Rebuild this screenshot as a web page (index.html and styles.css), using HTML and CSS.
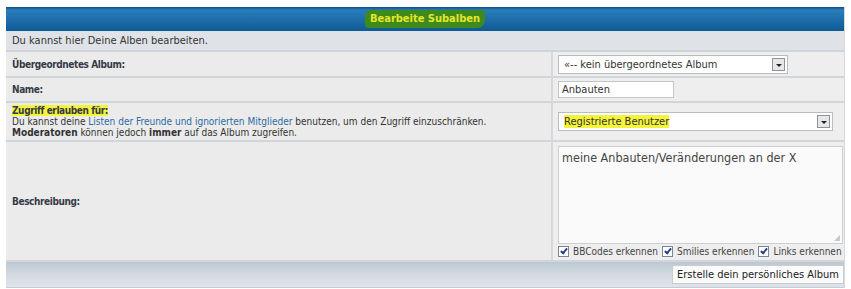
FILE: index.html
```html
<!DOCTYPE html>
<html lang="de">
<head>
  <meta charset="UTF-8" />
  <title>Bearbeite Subalben</title>
  <link rel="stylesheet" href="styles.css">
</head>
<body>
  <div class="panel">
    <div class="head"><span class="marker">Bearbeite Subalben</span></div>

    <div class="intro">Du kannst hier Deine Alben bearbeiten.</div>

    <div class="row r-parent">
      <div class="label"><b>Übergeordnetes Album:</b></div>
      <div class="field">
        <div class="select sel-parent">
          <span class="sel-text">«-- kein übergeordnetes Album</span>
          <span class="arrow"></span>
        </div>
      </div>
    </div>

    <div class="row r-name">
      <div class="label"><b>Name:</b></div>
      <div class="field">
        <div class="input">Anbauten</div>
      </div>
    </div>

    <div class="row r-access">
      <div class="label">
        <b class="hl">Zugriff erlauben für:</b>
        <div class="desc">
          Du kannst deine <a href="#">Listen der Freunde und ignorierten Mitglieder</a> benutzen, um den Zugriff einzuschränken.<br>
          <b>Moderatoren</b> können jedoch <b>immer</b> auf das Album zugreifen.
        </div>
      </div>
      <div class="field">
        <div class="select sel-access">
          <span class="sel-text"><span class="hl">Registrierte Benutzer</span></span>
          <span class="arrow"></span>
        </div>
      </div>
    </div>

    <div class="row r-desc">
      <div class="label"><b>Beschreibung:</b></div>
      <div class="field">
        <div class="textarea">meine Anbauten/Veränderungen an der X<span class="grip"></span></div>
        <div class="checks">
          <label><span class="cb"></span> BBCodes erkennen</label>
          <label><span class="cb"></span> Smilies erkennen</label>
          <label><span class="cb"></span> Links erkennen</label>
        </div>
      </div>
    </div>

    <div class="foot">
      <button class="submit">Erstelle dein persönliches Album</button>
    </div>
  </div>
</body>
</html>
```

FILE: styles.css
```css
body {
  margin: 0;
  padding: 7px 6px 0 6px;
  background: #fff;
  font-family: 'DejaVu Sans Condensed', 'DejaVu Sans', Verdana, sans-serif;
  font-size: 11px;
  color: #333;
}

.panel {
  background: #e9e9e9;
  border-right: 1px solid #d6d9dc;
}

.head {
  height: 24px;
  display: flex;
  align-items: center;
  justify-content: center;
  background: linear-gradient(#0c4f87 0, #2a7dbb 3px, #1c6aa6 60%, #0d5a95 100%);
}

.marker {
  font-weight: bold;
  color: #e6e62a;
  background: #3f8a1c;
  padding: 2px 5px 3px;
  border-radius: 6px 3px 8px 4px;
}

.intro {
  height: 19px;
  line-height: 19px;
  padding-left: 6px;
  background: #dfe3e7;
  border-bottom: 2px solid #cfd4d8;
}

.row {
  display: grid;
  grid-template-columns: 547px 1fr;
  border-bottom: 2px solid #d3d6d9;
}

.label {
  display: flex;
  flex-direction: column;
  justify-content: center;
  padding-left: 6px;
  background: #ebebeb;
  border-right: 2px solid #d6d8db;
  color: #353b45;
}

.label > b {
  font-size: 10px;
  letter-spacing: -0.4px;
}

.field {
  display: flex;
  flex-direction: column;
  justify-content: center;
  padding-left: 5px;
  background: #eeeeee;
}

.r-parent { height: 24px; }
.r-name { height: 23px; }
.r-access { height: 37px; }
.r-desc { height: 118px; }

.hl {
  background: #f4f43a;
  align-self: flex-start;
}

.desc {
  font-size: 10px;
  line-height: 11px;
  color: #333;
}

.desc a {
  color: #2d6aa3;
  text-decoration: none;
}

.select {
  display: flex;
  align-items: center;
  justify-content: space-between;
  height: 17px;
  background: #fff;
  border: 1px solid #b9bcc0;
  font-size: 11px;
  white-space: nowrap;
  color: #333;
}

.sel-text {
  padding-left: 5px;
}

.sel-parent { width: 228px; }
.sel-access { width: 273px; }

.arrow {
  width: 11px;
  height: 11px;
  margin-right: 2px;
  border: 1px solid #8e9296;
  background: #e7e7e7;
  position: relative;
}

.arrow::after {
  content: "";
  position: absolute;
  left: 3px;
  top: 5px;
  border-left: 3px solid transparent;
  border-right: 3px solid transparent;
  border-top: 3px solid #222;
}

.input {
  width: 111px;
  height: 15px;
  line-height: 15px;
  padding-left: 3px;
  background: #fff;
  border: 1px solid #c3c6c9;
  font-size: 11px;
}

.textarea {
  position: relative;
  height: 88px;
  width: 277px;
  margin-top: 1px;
  padding: 3px 3px 5px;
  background: #fafafa;
  border: 1px solid #cdd0d3;
  font-size: 12.5px;
  color: #444;
}

.grip {
  position: absolute;
  right: 2px;
  bottom: 2px;
  width: 6px;
  height: 6px;
  background: radial-gradient(circle, #aaa 0.6px, transparent 0.9px) 0 0 / 2px 2px;
  clip-path: polygon(100% 0, 100% 100%, 0 100%);
}

.checks {
  display: flex;
  gap: 4px;
  margin-top: 2px;
  font-size: 10px;
  color: #444;
}

.checks label {
  display: flex;
  align-items: center;
  gap: 4px;
}

.cb {
  width: 9px;
  height: 9px;
  border: 1px solid #7a8696;
  background: #fff;
  position: relative;
}

.cb::after {
  content: "";
  position: absolute;
  left: 3px;
  top: 0;
  width: 2px;
  height: 5px;
  border: solid #2a3f8a;
  border-width: 0 2px 2px 0;
  transform: rotate(40deg);
}

.foot {
  height: 25px;
  display: flex;
  align-items: center;
  justify-content: flex-end;
  padding-right: 0;
  background: linear-gradient(#bcc8d3, #d2dae2 50%, #dfe4ea);
  border-bottom: 1px solid #c5ccd3;
}

.submit {
  height: 19px;
  padding: 0 4px;
  background: #fbfbfb;
  border: 1px solid #c8ccd0;
  font-family: 'DejaVu Sans Condensed', 'DejaVu Sans', sans-serif;
  font-size: 11px;
  color: #222;
}
```
